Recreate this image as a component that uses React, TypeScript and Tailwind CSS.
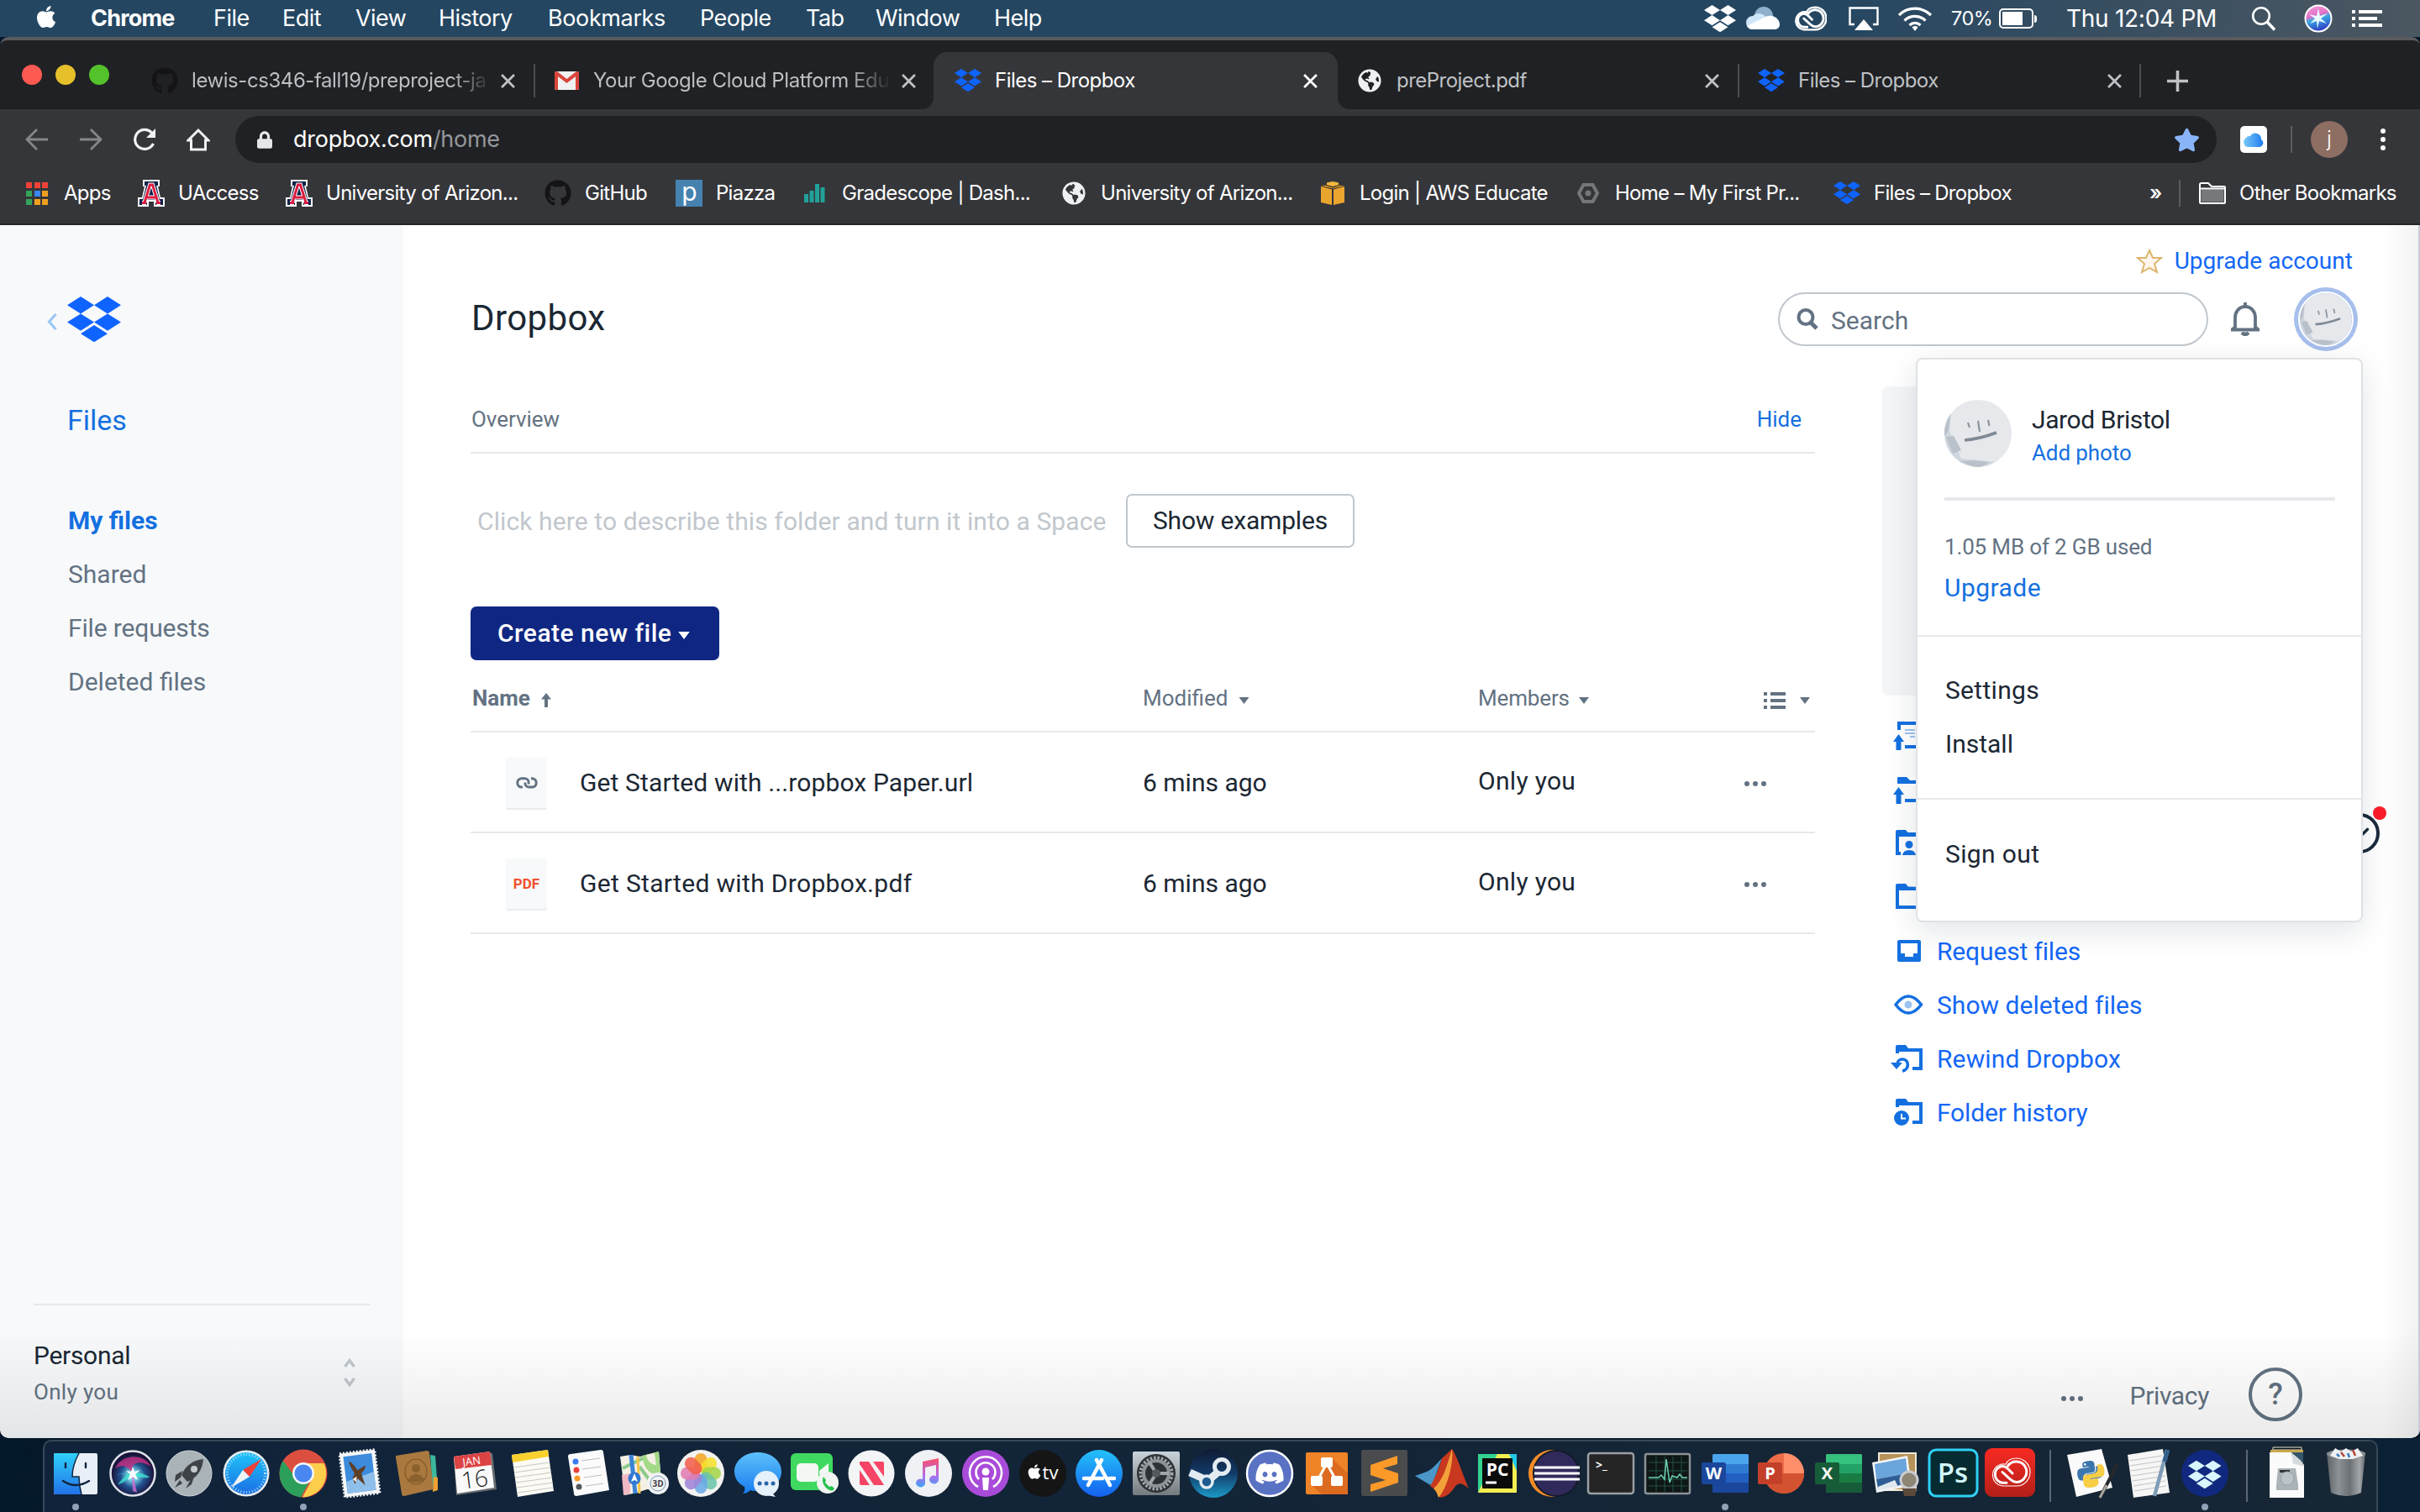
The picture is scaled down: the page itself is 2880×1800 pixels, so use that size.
import React from "react";
import { FaApple, FaGithub, FaDiscord, FaPython, FaLock, FaStar, FaGlobeAmericas } from "react-icons/fa";

type Kids = { children?: React.ReactNode };
type Cls = { className?: string };

function Dropbox({ className = "" }: Cls) {
  return (
    <svg viewBox="0 1.8 24 20.4" className={className} fill="currentColor">
      <path d="M6 1.807L0 5.629l6 3.822 6.001-3.822zM18 1.807l-6 3.822 6 3.822 6-3.822zM0 13.274l6 3.822 6.001-3.822L6 9.452zM18 9.452l-6 3.822 6 3.822 6-3.822zM6 18.371l6.001 3.822 6-3.822-6-3.822z" />
    </svg>
  );
}

function Caret({ className = "" }: Cls) {
  return (
    <svg viewBox="0 0 12 8" className={className} fill="currentColor">
      <path d="M0 0h12L6 8z" />
    </svg>
  );
}

/* Creative Cloud mark, drawn in a 46x35 box */
function CloudLoop({ outline, inner }: { outline: number; inner: number }) {
  return (
    <g fill="none" stroke="currentColor" strokeLinecap="round">
      <path d="M14 34A13.200 13.200 0 0 1 12 8.200C14.500 7.700 16.500 7.800 18 8.200 20 3.500 25 1 30 1a16.500 16.500 0 0 1 1 33z" strokeWidth={outline} />
      <path d="M26 19l-6-6c-3-2.500-6-3-8.500-2A10 10 0 0 0 14 30.200h5" strokeWidth={inner} />
      <path d="M20.500 10A12.300 12.300 0 1 1 31 29.500c-3 0-5-1-7-2.800L14 17.500" strokeWidth={inner} />
    </g>
  );
}

function SiriBall({ id, className = "" }: { id: string; className?: string }) {
  return (
    <svg viewBox="0 0 56 56" className={className}>
      <defs>
        <radialGradient id={id + "a"} cx=".5" cy=".55" r=".6">
          <stop offset="0" stopColor="#fff" />
          <stop offset=".15" stopColor="#7fe3ef" />
          <stop offset=".45" stopColor="#21508f" />
          <stop offset=".8" stopColor="#1a1238" />
        </radialGradient>
      </defs>
      <circle cx="28" cy="28" r="26.500" fill={"url(#" + id + "a)"} stroke="#dfe3ea" strokeWidth="2.500" />
      <path d="M7 22C14 6 40 2 50 20 38 12 24 14 28 28 20 17 13 18 7 22z" fill="#c92f83" opacity=".8" />
      <path d="M6 31c9-4 16-3 22-3 10-1 16 1 20 5-10 1-13 0-20-5-6 8-12 12-18 13 4-5 8-9 12-12-5-1-10 0-16 2z" fill="#3fe0d0" opacity=".8" />
      <path d="M28 27l5 24-5-2-1-20z" fill="#d26bd0" opacity=".8" />
      <path d="M28 20l2 6 7-2-6 5 3 7-6-4-6 4 3-7-5-4 6 1z" fill="#fff" />
    </svg>
  );
}

/* ---------- macOS menu bar ---------- */

function MenuBar() {
  return (
    <header className="flex h-[44px] shrink-0 items-center bg-linear-to-r from-[#244661] from-75% to-[#4b5761] pl-[40px] pr-[45px] font-['Inter',sans-serif] text-[27px] tracking-[-0.02em] text-white">
      <FaApple className="mr-[38px] mb-1 size-[30px]" />
      <nav className="flex flex-1 whitespace-nowrap">
        <span className="w-[146px] font-bold tracking-[-0.03em]">Chrome</span>
        <span className="w-[82px]">File</span>
        <span className="w-[87px]">Edit</span>
        <span className="w-[99px]">View</span>
        <span className="w-[130px]">History</span>
        <span className="w-[181px] tracking-[-0.014em]">Bookmarks</span>
        <span className="w-[126px]">People</span>
        <span className="w-[83px]">Tab</span>
        <span className="w-[141px]">Window</span>
        <span>Help</span>
      </nav>
      <Dropbox className="w-[38px]" />
      <svg viewBox="0 0 40 28" className="ml-[12px] h-[28px] w-[40px]">
        <circle cx="21" cy="11" r="11" fill="#8fb0cc" />
        <path d="M8 27A8 8 0 0 1 8 11c5-5 12-3 14 0l17 11a7 7 0 0 1-6 5z" fill="#cfe6fa" />
        <path d="M8 27c-4 0-6-2-7-4l22-11c8-4 17 2 17 9 0 4-3 6-7 6z" fill="#fff" />
      </svg>
      <svg viewBox="-1 -1 48 37" className="ml-[16px] h-[30px] w-[40px]"><CloudLoop outline={3} inner={3.6} /></svg>
      <svg viewBox="0 0 36 29" className="ml-[26px] h-[29px] w-[36px]">
        <path d="M7 21H1.500V1.500h33V21H29" fill="none" stroke="#fff" strokeWidth="2.400" />
        <path d="M18 15l11 13H7z" fill="#fff" />
      </svg>
      <svg viewBox="0 0 42 30" className="ml-[22px] h-[30px] w-[42px]" fill="none" stroke="#fff" strokeWidth="3.200">
        <path d="M2 11a27 27 0 0 1 38 0M8.500 17.500a18 18 0 0 1 25 0M14.500 23a9.500 9.500 0 0 1 13 0" />
        <path d="M17.500 25.500L21 30l3.500-4.500a5 5 0 0 0-7 0z" fill="#fff" stroke="none" />
      </svg>
      <span className="ml-[22px] w-[57px] text-[23.500px]">70%</span>
      <span className="flex items-center">
        <span className="block h-[24px] w-[41px] rounded-[5px] border-2 border-white p-[2px]">
          <span className="block h-full w-[24px] bg-white" />
        </span>
        <span className="ml-[1px] block h-[9px] w-[3px] rounded-r bg-white" />
      </span>
      <span className="ml-[35px] w-[220px] whitespace-nowrap text-[28px] tracking-[-0.01em]">Thu 12:04 PM</span>
      <svg viewBox="0 0 30 30" className="h-[30px] w-[30px]" fill="none" stroke="#fff" strokeWidth="2.600">
        <circle cx="12" cy="12" r="9.800" />
        <path d="M19 19l9 9.500" strokeWidth="3.500" />
      </svg>
      <svg viewBox="0 0 34 34" className="ml-[33px] h-[34px] w-[34px]">
        <defs>
          <linearGradient id="siriMini" x1="0" y1="0" x2=".3" y2="1">
            <stop offset="0" stopColor="#f2a4dd" />
            <stop offset=".45" stopColor="#e46fc6" />
            <stop offset=".6" stopColor="#3aa9e0" />
            <stop offset="1" stopColor="#3145c9" />
          </linearGradient>
        </defs>
        <circle cx="17" cy="17" r="15.500" fill="url(#siriMini)" stroke="#fff" strokeWidth="2" />
        <path d="M17 5l2 9 9-3-8 6 7 6-9-3-2 9-1-9-8 3 6-6-7-5 9 2z" fill="#e9fbff" />
      </svg>
      <svg viewBox="0 0 36 22" className="ml-[23px] h-[22px] w-[36px]" fill="#fff">
        <path d="M0 1h4v4H0zM8 1h28v4H8zM0 9h4v4H0zM8 9h22v4H8zM0 17h4v4H0zM8 17h28v4H8z" />
      </svg>
    </header>
  );
}

/* ---------- Chrome ---------- */

function Close({ className = "" }: Cls) {
  return (
    <svg viewBox="0 0 16 16" className={"size-[17px] shrink-0 " + className} stroke="currentColor" strokeWidth="2.600" fill="none">
      <path d="M1 1l14 14M15 1L1 15" />
    </svg>
  );
}

function Gmail({ className = "" }: Cls) {
  return (
    <svg viewBox="0 0 29 22" className={className}>
      <rect width="29" height="22" rx="2" fill="#f1f1f1" />
      <path d="M0 2a2 2 0 0 1 2-2h1l11.500 9L26 0h1a2 2 0 0 1 2 2v18a2 2 0 0 1-2 2h-2V6l-10.500 8L4 6v16H2a2 2 0 0 1-2-2z" fill="#d9453a" />
    </svg>
  );
}

function TabStrip() {
  return (
    <div className="flex h-[82px] items-end bg-[#202124] text-[24px] tracking-[-0.022em] text-[#bfc1c5]">
      <div className="flex h-[68px] w-[180px] items-center gap-[16px] pb-[14px] pl-[26px]">
        <span className="size-[24px] rounded-full bg-[#ff5a52]" />
        <span className="size-[24px] rounded-full bg-[#e6c02a]" />
        <span className="size-[24px] rounded-full bg-[#53c22b]" />
      </div>
      <div className="flex h-[68px] w-[457px] items-center">
        <FaGithub className="mr-[16px] size-[32px] text-[#141416]" />
        <span className="w-[352px] whitespace-nowrap bg-linear-to-r from-[#bfc1c5] from-88% to-[#bfc1c5]/10 bg-clip-text tracking-[-0.018em] text-transparent">lewis-cs346-fall19/preproject-ja</span>
        <Close className="ml-[16px]" />
        <span className="ml-auto h-[40px] w-[2px] bg-[#4c4d51]" />
      </div>
      <div className="flex h-[68px] w-[460px] items-center pl-[23px]">
        <Gmail className="mr-[17px] h-[22px] w-[29px]" />
        <span className="w-[352px] whitespace-nowrap bg-linear-to-r from-[#bfc1c5] from-86% to-[#bfc1c5]/5 bg-clip-text tracking-[-0.018em] text-transparent">Your Google Cloud Platform Edu</span>
        <Close className="ml-[15px]" />
      </div>
      <div className="flex h-[68px] w-[510px] items-end">
        <div className="h-[16px] w-[14px] bg-[#35363a]"><div className="size-full rounded-br-[14px] bg-[#202124]" /></div>
        <div className="flex h-[68px] flex-1 items-center rounded-t-[16px] bg-[#35363a] pl-[25px] pr-[24px] text-white">
          <Dropbox className="mr-[16px] w-[32px] text-[#0f64ff]" />
          <span className="flex-1">Files – Dropbox</span>
          <Close />
        </div>
        <div className="h-[16px] w-[15px] bg-[#35363a]"><div className="size-full rounded-bl-[14px] bg-[#202124]" /></div>
      </div>
      <div className="flex h-[68px] w-[463px] items-center pl-[9px]">
        <FaGlobeAmericas className="mr-[18px] size-[28px] text-[#eef0f3]" />
        <span className="flex-1">preProject.pdf</span>
        <Close className="mr-[22px]" />
        <span className="h-[40px] w-[2px] bg-[#4c4d51]" />
      </div>
      <div className="flex h-[68px] w-[478px] items-center pl-[22px]">
        <Dropbox className="mr-[16px] w-[32px] text-[#0f64ff]" />
        <span className="flex-1">Files – Dropbox</span>
        <Close className="mr-[21px]" />
        <span className="h-[40px] w-[2px] bg-[#4c4d51]" />
      </div>
      <div className="flex h-[68px] items-center pl-[31px]">
        <svg viewBox="0 0 24 24" className="size-[25px]" stroke="currentColor" strokeWidth="3.400"><path d="M12 0v24M0 12h24" /></svg>
      </div>
    </div>
  );
}

function Toolbar() {
  return (
    <div className="flex h-[72px] items-center bg-[#35363a] pl-[30px] text-white">
      <svg viewBox="0 0 28 28" className="mr-[36px] size-[28px]" fill="none" stroke="#85868a" strokeWidth="2.800"><path d="M27 14H3M14 2L2 14l12 12" /></svg>
      <svg viewBox="0 0 28 28" className="mr-[36px] size-[28px]" fill="none" stroke="#85868a" strokeWidth="2.800"><path d="M1 14h24M14 2l12 12-12 12" /></svg>
      <svg viewBox="0 0 28 28" className="mr-[36px] size-[28px]" fill="none" stroke="#f1f2f4" strokeWidth="3.200"><path d="M24.500 19A11.500 11.500 0 1 1 22.500 6" /><path d="M27 1v11H16z" fill="#f1f2f4" stroke="none" /></svg>
      <svg viewBox="0 0 28 28" className="mr-[30px] size-[28px]" fill="none" stroke="#f1f2f4" strokeWidth="3"><path d="M2 15L14 3l12 12h-3.500v11h-17V15z" /></svg>
      <div className="flex h-[56px] w-[2358px] items-center rounded-full bg-[#202124] pl-[26px] pr-[20px] text-[27px] tracking-[-0.01em]">
        <FaLock className="mr-[25px] h-[21px] w-[18px] text-[#e4e6e9]" />
        <span className="flex-1">dropbox.com<span className="text-[#94979c]">/home</span></span>
        <FaStar className="size-[31px] text-[#8ab4f8]" />
      </div>
      <div className="ml-[28px] flex size-[32px] items-center justify-center rounded-[5px] bg-white">
        <svg viewBox="0 0 26 17" className="w-[26px]">
          <defs><linearGradient id="icl" x1="0" x2="1"><stop offset="0" stopColor="#79c9f8" /><stop offset="1" stopColor="#1f7cf0" /></linearGradient></defs>
          <path d="M6 17a6 6 0 0 1-2-11 5 5 0 0 1 5-2 7 7 0 0 1 13 4 5 5 0 0 1-1 9z" fill="url(#icl)" />
        </svg>
      </div>
      <span className="ml-[28px] h-[32px] w-[2px] bg-[#5b5c60]" />
      <span className="ml-[22px] flex size-[44px] items-center justify-center rounded-full bg-[#8d6e63] text-[25px] font-light">j</span>
      <span className="ml-[39px] flex flex-col gap-[4px]">
        <i className="size-[6px] rounded-full bg-white" /><i className="size-[6px] rounded-full bg-white" /><i className="size-[6px] rounded-full bg-white" />
      </span>
    </div>
  );
}

function ArizonaA({ className = "" }: Cls) {
  return (
    <svg viewBox="0 0 32 32" className={className}>
      <path d="M6 0h20v8h-2l3 13h5v11H19v-6h-6v6H0V21h5L8 8H6z" fill="#fff" />
      <path d="M8 2h16v5h-2l4 16h4v7H21v-6H11v6H2v-7h4l4-16H8z" fill="#0c234b" />
      <path d="M5 27.500h5M22 27.500h5M8 27L14.500 6h3L24 27M11 21h10" fill="none" stroke="#fff" strokeWidth="5" />
      <path d="M5 27.500h5M22 27.500h5M8 27L14.500 6h3L24 27M11 21h10" fill="none" stroke="#dc1c40" strokeWidth="3" />
    </svg>
  );
}

function Bookmark({ icon, gap, w, children }: Kids & { icon: React.ReactNode; gap: string; w: string }) {
  return (
    <div className={"flex shrink-0 items-center whitespace-nowrap " + gap + " " + w}>
      {icon}
      <span>{children}</span>
    </div>
  );
}

function Bookmarks() {
  const dots = ["#ef4236", "#ef4236", "#ef4236", "#34a25a", "#3b86f0", "#f0a020", "#34a25a", "#f0a020", "#f0a020"];
  return (
    <div className="flex h-[66px] items-center border-b-2 border-[#242528] bg-[#35363a] pb-[8px] pl-[31px] text-[24px] tracking-[-0.03em] text-white">
      <Bookmark w="w-[133px]" gap="gap-[19px]" icon={<span className="grid w-[26px] grid-cols-3 gap-[3px]">{dots.map((c, i) => <i key={i} className="size-[7px]" style={{ background: c }} />)}</span>}>Apps</Bookmark>
      <Bookmark w="w-[176px]" gap="gap-[16px]" icon={<ArizonaA className="size-[32px]" />}>UAccess</Bookmark>
      <Bookmark w="w-[308px]" gap="gap-[16px]" icon={<ArizonaA className="size-[32px]" />}>University of Arizon...</Bookmark>
      <Bookmark w="w-[156px]" gap="gap-[16px]" icon={<FaGithub className="size-[32px] text-[#141416]" />}>GitHub</Bookmark>
      <Bookmark w="w-[153px]" gap="gap-[16px]" icon={<span className="flex size-[32px] items-center justify-center bg-[#4582b0] pb-[4px] text-[30px]">p</span>}>Piazza</Bookmark>
      <Bookmark w="w-[307px]" gap="gap-[20px]" icon={<svg viewBox="0 0 25 22" className="h-[22px] w-[25px]" fill="#21a199"><path d="M0 12h5v10H0zM6.500 8h5v14h-5zM13 0h5v22h-5zM19.500 4h5v18h-5z" /></svg>}>Gradescope | Dash...</Bookmark>
      <Bookmark w="w-[308px]" gap="gap-[18px]" icon={<FaGlobeAmericas className="size-[28px] text-[#eef0f3]" />}>University of Arizon...</Bookmark>
      <Bookmark w="w-[305px]" gap="gap-[18px]" icon={<svg viewBox="0 0 28 28" className="size-[28px]"><path d="M7 1.500L14 0l7 1.500V4l-7 2-7-2z" fill="#f5b73c" /><path d="M0 6l13 3.500V28L0 25zM28 6L15 9.500V28l13-3z" fill="#eaa52f" /><path d="M0 5.500l6-1 8 3 8-3 6 1-14 3z" fill="#c98718" /></svg>}>Login | AWS Educate</Bookmark>
      <Bookmark w="w-[305px]" gap="gap-[19px]" icon={<svg viewBox="0 0 26 24" className="w-[26px]" fill="none" stroke="#757679" strokeWidth="4"><path d="M7.500 2h11l5.500 10-5.500 10h-11L2 12z" /><circle cx="13" cy="12" r="3.500" fill="#757679" strokeWidth="0" /></svg>}>Home – My First Pr...</Bookmark>
      <Bookmark w="w-[376px]" gap="gap-[16px]" icon={<Dropbox className="w-[32px] text-[#0f64ff]" />}>Files – Dropbox</Bookmark>
      <span className="w-[35px] font-semibold">»</span>
      <span className="mr-[22px] h-[32px] w-[2px] bg-[#5b5c60]" />
      <Bookmark w="w-[240px]" gap="gap-[16px]" icon={<svg viewBox="0 0 32 26" className="w-[32px]" stroke="#fff" strokeWidth="2" fill="none"><path d="M1 7V2.500C1 1.500 2 1 3 1h8l4 4h15c1 0 1 0 1 1v18c0 1 0 1-1 1H2c-1 0-1 0-1-1z" /><path d="M2.500 8.500h27v15h-27z" fill="#77787b" stroke="none" /><path d="M1 7.500h30" /></svg>}>Other Bookmarks</Bookmark>
    </div>
  );
}

/* ---------- Dropbox page ---------- */

function Sidebar() {
  return (
    <aside className="flex w-[480px] shrink-0 flex-col bg-[#f7f9fb] text-[30px] text-[#637282]">
      <div className="mt-[85px] flex h-[55px] items-center pl-[56px]">
        <svg viewBox="0 0 12 20" className="mr-[12px] mt-1 h-[20px] w-[12px]" fill="none" stroke="#9cc8f3" strokeWidth="3.200"><path d="M10.500 1L2.500 10l8 9" /></svg>
        <Dropbox className="w-[64px] text-[#0f64ff]" />
      </div>
      <div className="mt-[72px] flex h-[40px] items-center pl-[80px] text-[34px] text-[#1470e0]">Files</div>
      <nav className="mt-[67px] flex flex-col pl-[81px]">
        <span className="flex h-[64px] items-center font-bold text-[#1470e0]">My files</span>
        <span className="flex h-[64px] items-center">Shared</span>
        <span className="flex h-[64px] items-center tracking-[-0.005em]">File requests</span>
        <span className="flex h-[64px] items-center">Deleted files</span>
      </nav>
      <div className="mx-[40px] mt-auto flex h-[160px] items-start border-t-2 border-[#e6e8eb]">
        <div className="flex-1">
          <div className="mt-[39px] flex h-[40px] items-center tracking-[-0.01em] text-[#1b2733]">Personal</div>
          <div className="mt-[8px] flex h-[32px] items-center text-[26px] tracking-[0.012em]">Only you</div>
        </div>
        <svg viewBox="0 0 14 34" className="mr-[17px] mt-[63px] h-[34px] w-[14px]" fill="none" stroke="#c1c7cd" strokeWidth="3.400"><path d="M1.500 10L7 2.500l5.500 7.500M1.500 24L7 31.500l5.500-7.500" /></svg>
      </div>
    </aside>
  );
}

function Face({ className = "" }: Cls) {
  return (
    <svg viewBox="0 0 80 80" className={className}>
      <defs><clipPath id="faceClip"><circle cx="40" cy="40" r="40" /></clipPath></defs>
      <g clipPath="url(#faceClip)">
        <rect width="80" height="80" fill="#e6e8eb" />
        <path d="M0 18l8-3-2 22 14 33 40 4-20 10H0z" fill="#d0d6dd" />
        <path d="M0 20l7-3-2 20-5 6zM2 44l9-1 9 17-10 4zM18 73l18-1 18 2-14 8z" fill="#b9c1ca" />
      </g>
      <path d="M28 27l2 6M40 25l2 13M52 24l1.500 7" stroke="#8a949f" strokeWidth="2.200" />
      <path d="M24 48c12-1 22-3 38-9" stroke="#7f8a96" strokeWidth="3.600" fill="none" />
    </svg>
  );
}

function FileRow({ icon, name, tracking }: { icon: React.ReactNode; name: string; tracking: string }) {
  return (
    <div className="flex h-[120px] items-center border-b-2 border-[#e6e8ed] text-[30px] text-[#1b2733]">
      <span className="ml-[42px] mr-[39px] mt-[4px] flex h-[62px] w-[49px] items-center justify-center rounded-[3px] border-b-2 border-[#e9ecef] bg-[#f7f9fa]">{icon}</span>
      <span className={"w-[670px] " + tracking}>{name}</span>
      <span className="w-[399px]">6 mins ago</span>
      <span className="w-[317px] pb-[3px] tracking-[0.01em]">Only you</span>
      <span className="mt-[3px] flex gap-[4px]">
        <i className="size-[6px] rounded-full bg-[#637282]" /><i className="size-[6px] rounded-full bg-[#637282]" /><i className="size-[6px] rounded-full bg-[#637282]" />
      </span>
    </div>
  );
}

function Files() {
  return (
    <section className="flex w-[1600px] flex-col">
      <div className="flex h-[80px] items-center justify-between border-b-2 border-[#e6e8eb] pl-[1px] pr-[16px] pt-[1px] text-[26px]">
        <span className="tracking-[-0.002em] text-[#637282]">Overview</span>
        <span className="text-[#1470e0]">Hide</span>
      </div>
      <div className="mt-[48px] flex h-[64px] items-center pl-[8px]">
        <span className="w-[772px] whitespace-nowrap pt-[1px] text-[30px] tracking-[0.0035em] text-[#c1c7cd]">Click here to describe this folder and turn it into a Space</span>
        <button className="h-[64px] w-[272px] rounded-[7px] border-2 border-[#c1c7cd] pb-[2px] text-[30px] tracking-[-0.006em] text-[#1b2733]">Show examples</button>
      </div>
      <button className="mt-[70px] flex h-[64px] w-[296px] items-center rounded-[7px] bg-[#0f2782] pb-[2px] pl-[32px] text-[30px] font-medium tracking-[0.016em] text-white">
        Create new file <Caret className="ml-[7px] mt-[6px] h-[9px] w-[16px]" />
      </button>
      <div className="flex h-[86px] items-center border-b-2 border-[#e6e8ed] pt-[7px] text-[26px] text-[#637282]">
        <span className="flex w-[800px] items-center pl-[2px] font-bold">Name
          <svg viewBox="0 0 12 17" className="ml-[13px] mt-[4px] h-[17px] w-[12px]" fill="currentColor"><path d="M6 0l6 7.500H8V17H4V7.500H0z" /></svg>
        </span>
        <span className="flex w-[399px] items-center">Modified <Caret className="ml-[13px] mt-[4px] h-[8px] w-[13px]" /></span>
        <span className="flex w-[340px] items-center tracking-[-0.006em]">Members <Caret className="ml-[11px] mt-[4px] h-[8px] w-[12px]" /></span>
        <svg viewBox="0 0 26 20" className="mt-[4px] h-[20px] w-[26px]" fill="currentColor"><path d="M0 0h4v4H0zM8 0h18v4H8zM0 8h4v4H0zM8 8h18v4H8zM0 16h4v4H0zM8 16h18v4H8z" /></svg>
        <Caret className="ml-[17px] mt-[5px] h-[8px] w-[12px]" />
      </div>
      <FileRow name="Get Started with ...ropbox Paper.url" tracking="tracking-[0.004em]" icon={<svg viewBox="0 0 28 14" className="h-[14px] w-[28px]" fill="none" stroke="#637282" strokeWidth="2.900"><path d="M9 12H7A5.200 5.200 0 0 1 7 1.800h4.500a4.600 4.600 0 0 1 4.600 4.600v2M19 1.800h2A5.200 5.200 0 0 1 21 12h-4.500a4.600 4.600 0 0 1-4.600-4.600v-1" /></svg>} />
      <FileRow name="Get Started with Dropbox.pdf" tracking="tracking-[0.011em]" icon={<span className="pt-[2px] text-[17px] font-bold text-[#f1502f]">PDF</span>} />
    </section>
  );
}

function UploadFile() {
  return (
    <svg viewBox="0 0 40 40" className="size-[40px]" fill="none" stroke="#1470e0" strokeWidth="4">
      <path d="M8 13V5h30M15 33h25" /><path d="M7.500 37V26" strokeWidth="6" /><path d="M7.500 18l6.500 9H1z" fill="#1470e0" stroke="none" />
      <path d="M15 13h12M15 17h12M21 21h6" stroke="#9cc3f0" strokeWidth="2" />
    </svg>
  );
}
function UploadFolder() {
  return (
    <svg viewBox="0 0 40 40" className="size-[40px]" fill="none" stroke="#1470e0" strokeWidth="4">
      <path d="M6 13V6q0-1 2-1h9l4 4h20v4z" fill="#1470e0" stroke="none" /><path d="M15 33h25" /><path d="M7.500 37V25" strokeWidth="6" /><path d="M7.500 17l6.500 9H1z" fill="#1470e0" stroke="none" />
    </svg>
  );
}
function FolderIcon({ kind }: { kind: "shared" | "plain" | "rewind" | "history" }) {
  return (
    <svg viewBox="0 0 40 40" className="size-[40px] overflow-visible" fill="none" stroke="#1470e0" strokeWidth="4">
      <path d="M4 12V6q0-2 2-2h10l3 4h17v4z" fill="#1470e0" stroke="none" />
      {kind === "plain" && <path d="M6 9v23h28V10z" />}
      {kind === "shared" && <><path d="M10 32H6V9h28v23h-4" /><circle cx="20" cy="21.500" r="4.500" fill="#1470e0" stroke="none" /><path d="M12 34q1-6 8-6t8 6z" fill="#1470e0" stroke="none" /></>}
      {kind === "rewind" && <><path d="M24 32h10V10H6v4" /><path d="M12 35c8-1 9-14 0-14-4 0-6 3-6 6" strokeWidth="3.600" /><path d="M-2 25h14l-7 8z" fill="#1470e0" stroke="none" /></>}
      {kind === "history" && <><path d="M24 32h10V10H6v4" /><circle cx="11" cy="27" r="9" fill="#1470e0" stroke="none" /><path d="M11 22v5.500h5" stroke="#fff" strokeWidth="2" /></>}
    </svg>
  );
}
function RequestIcon() {
  return (
    <svg viewBox="0 0 40 40" className="size-[40px]"><path fillRule="evenodd" d="M8 7h24q2 0 2 2v22q0 2-2 2H8q-2 0-2-2V9q0-2 2-2zM10 11v12h5v4h10v-4h5V11z" fill="#1470e0" /></svg>
  );
}
function EyeIcon() {
  return (
    <svg viewBox="0 0 40 40" className="size-[40px]" fill="none" stroke="#1470e0" strokeWidth="3.600"><path d="M4 20Q19 0 34.500 20 19 40 4 20z" strokeLinejoin="round" /><circle cx="19" cy="20" r="4.500" fill="#9cc3f0" stroke="none" /></svg>
  );
}

function Actions() {
  const rows: [React.ReactNode, string, string][] = [
    [<UploadFile />, "Upload files", ""],
    [<UploadFolder />, "Upload folder", ""],
    [<FolderIcon kind="shared" />, "New shared folder", ""],
    [<FolderIcon kind="plain" />, "New folder", ""],
    [<RequestIcon />, "Request files", "tracking-[-0.005em]"],
    [<EyeIcon />, "Show deleted files", "tracking-[0.001em]"],
    [<FolderIcon kind="rewind" />, "Rewind Dropbox", "tracking-[0.004em]"],
    [<FolderIcon kind="history" />, "Folder history", "tracking-[-0.005em]"],
  ];
  return (
    <aside className="ml-[80px] flex w-[560px] flex-col">
      <div className="h-[368px] rounded-[7px] bg-[#f4f5f7]" />
      <ul className="mt-[16px] pl-[12px] text-[30px] text-[#1467f5]">
        {rows.map(([icon, label, tracking], i) => (
          <li key={label} className="flex h-[64px] items-center gap-[13px]">
            {icon}
            {i > 3 && <span className={tracking}>{label}</span>}
          </li>
        ))}
      </ul>
    </aside>
  );
}

function PageHeader() {
  return (
    <div className="flex h-[192px] justify-between pr-[74px]">
      <h1 className="mt-[85px] flex h-[50px] items-center pl-[1px] text-[42px] tracking-[0.009em] text-[#1b2733]">Dropbox</h1>
      <div className="flex flex-col">
        <div className="flex h-[80px] items-center justify-end pr-[6px] pt-[6px] text-[28px] tracking-[0.001em] text-[#1467f5]">
          <svg viewBox="0 0 32 30" className="mr-[14px] h-[30px] w-[32px]" fill="#fff6ee" stroke="#dcb66c" strokeWidth="2"><path d="M16 2l4 9h10l-8 7 3 10-9-5-9 5 3-10-8-7h10z" /></svg>
          Upgrade account
        </div>
        <div className="flex h-[64px] items-center">
          <div className="flex h-[64px] w-[512px] items-center rounded-full border-2 border-[#c1c7cd] pl-[20px] text-[30px] text-[#637282]">
            <svg viewBox="0 0 26 26" className="mr-[15px] size-[26px]" fill="none" stroke="#637282" strokeWidth="4"><circle cx="11" cy="10.500" r="8.500" /><path d="M17 17l7 7" strokeWidth="5" /></svg>
            <span className="pt-[3px]">Search</span>
          </div>
          <svg viewBox="0 0 38 40" className="ml-[25px] h-[40px] w-[38px]" fill="none" stroke="#637282" strokeWidth="3.800"><path d="M7 32V18c0-7 5-13 12-13s12 6 12 13v14M2 32.500h34M3 33l5-5M35 33l-5-5M19 5V0" /><path d="M15 36q4 4 8 0" strokeWidth="4.500" /></svg>
          <span className="-my-2 ml-[39px] size-[76px] rounded-full bg-[#a6bfec] p-[5px]"><Face className="size-[66px] rounded-full border-2 border-white" /></span>
        </div>
      </div>
    </div>
  );
}

function AccountMenu() {
  return (
    <div className="absolute left-[2280px] top-[158px] flex h-[672px] w-[532px] flex-col rounded-[8px] border-2 border-[#e0e2e6] bg-white text-[30px] text-[#1b2733] shadow-[0_10px_36px_rgba(20,30,50,0.12)]">
      <div className="ml-[32px] mr-[31px] flex h-[168px] items-start border-b-4 border-[#e6e8eb] pt-[48px]">
        <Face className="mr-[24px] size-[80px]" />
        <div>
          <div className="flex h-[46px] items-center tracking-[-0.013em]">Jarod Bristol</div>
          <div className="flex h-[34px] items-center text-[26px] tracking-[-0.004em] text-[#1470e0]">Add photo</div>
        </div>
      </div>
      <div className="flex h-[162px] flex-col border-b-2 border-[#e6e8eb] pl-[32px] pt-[35px]">
        <div className="flex h-[40px] items-center text-[26px] tracking-[-0.006em] text-[#637282]">1.05 MB of 2 GB used</div>
        <div className="mt-[6px] flex h-[44px] items-center tracking-[0.015em] text-[#1470e0]">Upgrade</div>
      </div>
      <div className="flex h-[194px] flex-col border-b-2 border-[#e6e8eb] pl-[33px] pt-[31px]">
        <div className="flex h-[64px] items-center tracking-[0.01em]">Settings</div>
        <div className="flex h-[64px] items-center">Install</div>
      </div>
      <div className="mt-[32px] flex h-[64px] items-center pl-[33px] tracking-[0.012em]">Sign out</div>
    </div>
  );
}

function Page() {
  return (
    <div className="relative flex h-[1444px] overflow-hidden rounded-b-[10px] bg-white font-['Roboto',sans-serif]">
      <Sidebar />
      <main className="flex flex-1 flex-col pl-[80px]">
        <PageHeader />
        <div className="flex">
          <Files />
          <Actions />
        </div>
        <footer className="mb-[20px] mt-auto flex h-[64px] items-center justify-end pr-[140px] text-[30px] text-[#637282]">
          <span className="mr-[56px] mt-[10px] flex gap-[4px]">
            <i className="size-[6px] rounded-full bg-[#637282]" /><i className="size-[6px] rounded-full bg-[#637282]" /><i className="size-[6px] rounded-full bg-[#637282]" />
          </span>
          <span className="mr-[47px] pt-[3px] tracking-[-0.012em]">Privacy</span>
          <span className="flex size-[64px] items-center justify-center rounded-full border-4 border-[#637282] text-[36px] font-medium">?</span>
        </footer>
      </main>
      <div className="absolute left-[2784px] top-[700px] size-[48px] rounded-full border-4 border-[#1b2a3d]">
        <svg viewBox="0 0 42 42" className="size-full" fill="none" stroke="#1b2a3d" strokeWidth="3.500"><path d="M12 21l7 7 12-12" strokeLinecap="round" /></svg>
        <i className="absolute -top-[12px] left-[36px] size-[16px] rounded-full bg-[#fa1e2a]" />
      </div>
      <AccountMenu />
      <div className="pointer-events-none absolute inset-x-0 bottom-0 h-[130px] bg-linear-to-b from-black/0 to-black/8" />
      <div className="pointer-events-none absolute inset-y-0 right-0 w-[44px] border-r-2 border-[#c9ccd6] bg-linear-to-r from-black/0 to-black/5" />
    </div>
  );
}

/* ---------- Dock ---------- */

function Svg({ children }: Kids) {
  return <svg viewBox="0 0 56 56" className="size-[56px] overflow-visible">{children}</svg>;
}
function Glyph({ x = 28, y, size, fill = "#fff", weight = 700, children }: Kids & { x?: number; y: number; size: number; fill?: string; weight?: number }) {
  return <text x={x} y={y} fontSize={size} fill={fill} fontWeight={weight} textAnchor="middle" fontFamily="Open Sans, sans-serif">{children}</text>;
}
function Office({ label, a, b, c, d, round }: { label: string; a: string; b: string; c: string; d: string; round?: boolean }) {
  const clip = "office" + label;
  return (
    <Svg>
      <defs><clipPath id={clip}>{round ? <circle cx="31" cy="28" r="24" /> : <rect x="13" y="5" width="43" height="46" rx="2" />}</clipPath></defs>
      <g clipPath={"url(#" + clip + ")"}>
        <rect width="56" height="56" fill={b} />
        {round ? <><rect x="31" width="25" height="28" fill={a} /><rect y="28" width="56" height="28" fill={c} /></> : <><rect y="0" width="56" height="17" fill={a} /><rect y="28" width="56" height="11" fill={c} /><rect y="39" width="56" height="17" fill={d} /></>}
      </g>
      <rect x="0" y="15" width="29" height="26" rx="2" fill={d} />
      <Glyph x={14.5} y={35} size={20}>{label}</Glyph>
    </Svg>
  );
}

const PETALS = ["#f5a623", "#f6e02d", "#a5d64a", "#6cc5a8", "#6aa9e6", "#a084d6", "#e07cb0", "#f2604d"];

const mainIcons: React.ReactNode[] = [
  <Svg>
    <defs><linearGradient id="fnd" x2="0" y2="1"><stop stopColor="#2fd0fa" /><stop offset="1" stopColor="#2272e8" /></linearGradient></defs>
    <rect x="2" y="4" width="52" height="49" rx="2" fill="#e8eff7" />
    <path d="M4 4h28c-5 9-8 17-8 28h8c0 7 1 14 3 21H4q-2 0-2-2V6q0-2 2-2z" fill="url(#fnd)" />
    <path d="M16 16v5M40 16v5M13 37q15 10 31 0" stroke="#12253d" strokeWidth="2.400" fill="none" strokeLinecap="round" />
    <path d="M32 4c-5 9-8 17-8 28h8c0 7 1 14 3 21" stroke="#12253d" strokeWidth="1.500" fill="none" />
  </Svg>,
  <SiriBall id="dockSiri" className="size-[56px]" />,
  <Svg>
    <circle cx="28" cy="28" r="27" fill="#a9b3b8" stroke="#d5dadd" />
    <path d="M45 11c-13 1-22 9-26 19l7 8c10-4 18-13 19-27zM20 25l-8 5-1 8 7-5zM29 37l-5 9 7-5 3-9zM17 36l-6 9 9-5z" fill="#3f4347" />
    <circle cx="34" cy="23" r="4" fill="#c3cacf" />
  </Svg>,
  <Svg>
    <defs><linearGradient id="saf" x2="0" y2="1"><stop stopColor="#20c3f8" /><stop offset="1" stopColor="#1b6fe4" /></linearGradient></defs>
    <circle cx="28" cy="28" r="27.500" fill="#e8ecef" /><circle cx="28" cy="28" r="25" fill="url(#saf)" />
    <circle cx="28" cy="28" r="22.500" fill="none" stroke="#a9def8" strokeWidth="3" strokeDasharray="1 2.400" />
    <path d="M46 11L32 32l-8-8z" fill="#f0403a" /><path d="M10 45l14-21 8 8z" fill="#eef3f6" />
  </Svg>,
  <Svg>
    <circle cx="28" cy="28" r="28.500" fill="#dc4f40" />
    <path d="M4 13A28.500 28.500 0 0 0 25 56.500l12-22-18-1z" fill="#2c9f5b" />
    <path d="M52.500 16H28l11 18-12 22.500A28.500 28.500 0 0 0 52.500 16z" fill="#fdce4c" />
    <circle cx="28" cy="28" r="13" fill="#f4f6f8" /><circle cx="28" cy="28" r="10.500" fill="#4a86f0" />
  </Svg>,
  <Svg>
    <g transform="rotate(-7 28 28)">
      <rect x="7" y="2" width="42" height="52" fill="#f5f6f7" stroke="#f5f6f7" strokeWidth="3" strokeDasharray="2 2" /><rect x="11" y="6" width="34" height="44" fill="#3d8bdc" /><path d="M11 36l34-8v22H11z" fill="#8fc0ec" />
      <path d="M17 12q4 2 9 12c3-1 7-4 10-4-1 5-5 7-6 9l3 14-8-9-4 6-2-7 3-6q-5-9-5-15z" fill="#5d4027" /><path d="M19 34l5-3-1 7z" fill="#f6f1e5" />
    </g>
  </Svg>,
  <Svg>
    <path d="M44 6l6 1 3 40-6 2z" fill="#3bb79e" /><path d="M48 32l5 1v15l-6 2z" fill="#f0a030" />
    <path d="M3 7L40 1q3 0 3 3l5 43-35 8q-3 0-3-3L3 9z" fill="#a9793f" />
    <ellipse cx="27" cy="26" rx="13" ry="15" fill="none" stroke="#8a602d" strokeWidth="1.500" /><circle cx="27" cy="22" r="5" fill="#8a602d" /><path d="M17 36q10-14 20-1-9 7-20 1z" fill="#8a602d" />
  </Svg>,
  <Svg>
    <path d="M4 10l46-6 5 43-48 7z" fill="#6a6d70" /><path d="M4 8l43-6 5 43-44 7z" fill="#fafafa" /><path d="M4 8l43-6 2 16-43 5z" fill="#dc4344" />
    <g transform="rotate(-7 28 28)"><Glyph y={18} x={27} size={13} weight={400}>JAN</Glyph><Glyph y={45} x={28} size={28} fill="#222" weight={300}>16</Glyph></g>
  </Svg>,
  <Svg>
    <path d="M6 6l43-6 7 49-43 7z" fill="#fbfaf5" /><path d="M6 6l43-6 1 8L7 15z" fill="#f8d12e" />
    <path d="M8 21l43-6M9 27l43-6M10 33l43-6M11 39l43-6M12 45l43-6M13 51l42-6" stroke="#c9c9c4" />
  </Svg>,
  <Svg>
    <path d="M8 5l36-5q3 0 3 3l7 45-39 7q-3 0-3-3L5 8q0-3 3-3z" fill="#fbfbfb" />
    <circle cx="14" cy="14" r="3.500" fill="#3a7cf0" /><circle cx="15" cy="24" r="3.500" fill="#ea3f3a" /><circle cx="16" cy="34" r="3.500" fill="#f59b25" /><circle cx="18" cy="44" r="3.500" fill="#55585e" />
    <path d="M21 13l22-3M22 23l22-3M24 33l21-3M26 43l21-3" stroke="#bcbdbf" />
  </Svg>,
  <Svg>
    <path d="M-1 8l12-2 12 2 22-6 4 46-18-1-12 4-14 3z" fill="#f4f0e4" /><path d="M25 7l20-5 2 26c-12 4-20-6-22-21z" fill="#a3d987" /><path d="M30 6l10-2 2 14c-6 0-11-5-12-12z" fill="#f4f0e4" /><path d="M1 30l10-2v24l-8 2z" fill="#f0b9c4" />
    <path d="M22 20l24 32M2 22l24-12" stroke="#8dcb8b" strokeWidth="4" /><path d="M20 8l2 44" stroke="#f6c64b" strokeWidth="3" /><path d="M12 6l5 46" stroke="#3b83d8" strokeWidth="5" />
    <circle cx="16" cy="34" r="7.500" fill="#2f78d4" /><path d="M16 28l4 10-4-2-4 2z" fill="#fff" />
    <circle cx="44" cy="40" r="13" fill="#f0f2f4" /><circle cx="44" cy="40" r="9" fill="none" stroke="#7d98ad" /><Glyph x={44} y={44} size={10} fill="#444">3D</Glyph>
  </Svg>,
  <Svg>
    <circle cx="28" cy="28" r="28" fill="#f2f2f0" />
    {PETALS.map((c, i) => <rect key={c} x="20.500" y="4" width="15" height="23" rx="7.500" fill={c} opacity=".88" transform={"rotate(" + i * 45 + " 28 28)"} />)}
  </Svg>,
  <Svg>
    <defs><linearGradient id="msg" x2="0" y2="1"><stop stopColor="#5cc0fb" /><stop offset="1" stopColor="#1a7df0" /></linearGradient></defs>
    <path d="M28 3c16 0 28 10 28 23S44 49 28 49c-4 0-7 0-9-1-2 2-5 4-9 4 2-2 3-5 2-8C4 40 0 33 0 26 0 13 12 3 28 3z" fill="url(#msg)" />
    <circle cx="38" cy="40" r="15" fill="#e5f1fb" /><path d="M44 50l5 6-11-2z" fill="#e5f1fb" /><circle cx="30" cy="40" r="2.500" fill="#2a65a8" /><circle cx="38" cy="40" r="2.500" fill="#2a65a8" /><circle cx="46" cy="40" r="2.500" fill="#2a65a8" />
  </Svg>,
  <Svg>
    <rect x="-1" y="4" width="50" height="44" rx="6" fill="#3fd95f" /><rect x="6" y="16" width="26" height="22" rx="5" fill="#f3f8f3" /><path d="M33 25l11-9v22l-11-9z" fill="#f3f8f3" />
    <circle cx="43" cy="39" r="13" fill="#f1f5f2" /><path d="M38 32l3 4-1 3 5 5 3-1 3 3c-2 4-6 3-10-1s-5-9-3-13z" fill="#27c24c" />
  </Svg>,
  <Svg><circle cx="28" cy="28" r="27.500" fill="#f3f4f5" /><path d="M14 14h11l18 28H31L14 17zM14 24l12 18H16q-2 0-2-2zM30 14h11q2 0 2 2v16z" fill="#f64566" /></Svg>,
  <Svg>
    <defs><linearGradient id="mus" x2="0" y2="1"><stop stopColor="#fa4f68" /><stop offset=".6" stopColor="#b56bea" /><stop offset="1" stopColor="#38a6f6" /></linearGradient></defs>
    <circle cx="28" cy="28" r="28" fill="#eff1f4" /><path d="M21 14l19-4v26a5.500 5 0 1 1-3-5V18l-13 3v19a5.500 5 0 1 1-3-5z" fill="url(#mus)" />
  </Svg>,
  <Svg>
    <circle cx="28" cy="28" r="28" fill="#a94bd9" /><g fill="none" stroke="#fff" strokeWidth="2.600"><path d="M19 44a19 19 0 1 1 18 0" /><path d="M20 35a11.500 11.500 0 1 1 16 0" /></g><circle cx="28" cy="26" r="4.500" fill="#fff" /><path d="M24 33h8l-1 15h-6z" fill="#fff" />
  </Svg>,
  <Svg><circle cx="28" cy="28" r="28" fill="#151516" /><FaApple x="8" y="16" width="19" color="#fff" size={20} /><Glyph x={37} y={35} size={22} weight={400}>tv</Glyph></Svg>,
  <Svg>
    <defs><linearGradient id="aps" x2="0" y2="1"><stop stopColor="#24c1f9" /><stop offset="1" stopColor="#1560f0" /></linearGradient></defs>
    <circle cx="28" cy="28" r="28" fill="url(#aps)" /><g stroke="#fff" strokeWidth="4.500" strokeLinecap="round"><path d="M31 12L15 42M25 12l16 30M10 34h22M40 34h6" /></g>
  </Svg>,
  <Svg>
    <defs><linearGradient id="sys" x2="0" y2="1"><stop stopColor="#c9d4da" /><stop offset="1" stopColor="#747a7e" /></linearGradient></defs>
    <rect x="0" y="2" width="56" height="52" rx="2" fill="url(#sys)" /><circle cx="28" cy="28" r="23" fill="#2e3236" /><circle cx="28" cy="28" r="18.500" fill="none" stroke="#a0a6aa" strokeWidth="4" strokeDasharray="2.600 1.800" /><circle cx="28" cy="28" r="15" fill="none" stroke="#8c9297" strokeWidth="4" /><path d="M28 28H43M28 28l-8-13M28 28l-8 13" stroke="#a0a6aa" strokeWidth="4" /><circle cx="28" cy="28" r="5" fill="#54595e" />
  </Svg>,
  <Svg>
    <defs><linearGradient id="stm" x2="0" y2="1"><stop stopColor="#101a33" /><stop offset=".5" stopColor="#123a68" /><stop offset="1" stopColor="#1c9ac8" /></linearGradient></defs>
    <circle cx="28" cy="28" r="29" fill="url(#stm)" /><circle cx="38" cy="20" r="8.500" fill="none" stroke="#e3ebf2" strokeWidth="5" /><path d="M0 27l18 8M20 38l13-11" stroke="#e3ebf2" strokeWidth="9" /><circle cx="20" cy="38" r="7" fill="#1d5c8f" stroke="#e3ebf2" strokeWidth="3.500" />
  </Svg>,
  <Svg><circle cx="28" cy="28" r="27" fill="#5a72c4" stroke="#fff" strokeWidth="2.500" /><FaDiscord x="10" y="10" size={36} color="#fff" /></Svg>,
  <Svg><rect x="3" y="3" width="50" height="50" rx="2" fill="#ef8327" /><path d="M34 10l19 18v25H22L10 42z" fill="#dc6b20" /><path d="M27 18l-11 20M29 18l11 20" stroke="#fff" strokeWidth="3" /><rect x="21" y="9" width="14" height="12" rx="2" fill="#fff" /><rect x="9" y="31" width="14" height="12" rx="2" fill="#fff" /><rect x="33" y="31" width="14" height="12" rx="2" fill="#fff" /></Svg>,
  <Svg><rect x="1" y="0" width="55" height="55" rx="2" fill="#4a4b4c" /><path d="M44 7L12 18v12l18 6-18 5v9l33-11V28l-18-6 17-5z" fill="#fb9a29" /></Svg>,
  <Svg>
    <path d="M-2 31l14-5c8-4 12-10 18-16L18 43z" fill="#4a96c8" /><path d="M30 10L42-1c6 8 14 34 20 47-9-7-12-8-18 0-4 6-9 10-16 11-3-9-8-11-12-14 6-9 10-20 14-33z" fill="#c8381e" /><path d="M42-1c2 14-4 44-16 58-2-5-2-7-6-11 12-10 16-28 22-47z" fill="#f2a03a" />
  </Svg>,
  <Svg><rect x="5" y="5" width="46" height="46" fill="#33d391" /><path d="M28 5h23v46H5z" fill="#f2ee52" /><path d="M42 5h9v20z" fill="#21c8e8" /><rect x="10" y="10" width="36" height="36" fill="#0b0b0b" /><Glyph x={28} y={31} size={21}>PC</Glyph><path d="M14 39h13" stroke="#fff" strokeWidth="3" /></Svg>,
  <Svg><circle cx="25" cy="28" r="28" fill="#f28c28" /><circle cx="30" cy="28" r="28" fill="#151a2c" /><circle cx="30" cy="28" r="26" fill="#302a5c" /><path d="M4 21h54M4 28h54M4 35h54" stroke="#fff" strokeWidth="3" /></Svg>,
  <Svg><rect x="1" y="4" width="54" height="48" rx="3" fill="#252525" stroke="#9aa0a4" strokeWidth="2.500" /><Glyph x={17} y={23} size={14}>&gt;_</Glyph></Svg>,
  <Svg><rect x="1" y="5" width="53" height="47" rx="2" fill="#0e1716" stroke="#8b9295" strokeWidth="2.500" /><path d="M5 15h46M5 25h46M5 35h46M5 43h46M14 8v42M24 8v42M34 8v42M44 8v42" stroke="#22504a" /><path d="M5 33h12l3-3 4 5 2-24 4 28 3-8 6 2 3-4 3 4h6" fill="none" stroke="#6fd0b0" strokeWidth="1.500" /></Svg>,
  <Office label="W" a="#4aa5ec" b="#2f7bd2" c="#225fc0" d="#1a479c" />,
  <Office label="P" a="#ff8f6b" b="#ed6c47" c="#d35230" d="#c4402a" round />,
  <Office label="X" a="#36c17e" b="#23a266" c="#187c43" d="#175c38" />,
  <Svg><rect x="8" y="4" width="44" height="44" fill="#b8935a" stroke="#f0e8d8" strokeWidth="2" /><path d="M0 15l42-8 5 36-42 8z" fill="#f3f5f6" /><path d="M3 17l37-7 2 18-37 7z" fill="#6aa5dc" /><path d="M5 35l37-7 2 12-37 7z" fill="#2e5d96" /><path d="M7 44l20-8 4 8-24 4z" fill="#dfe8ee" /><circle cx="44" cy="36" r="10" fill="#8f8575" stroke="#c8ccd0" strokeWidth="3" /><path d="M36 46h17l-2 9H38z" fill="#5b4a3a" /></Svg>,
  <Svg><rect x="0" y="0" width="57" height="55" rx="8" fill="#062b30" stroke="#2fd0f5" strokeWidth="3" /><Glyph y={39} size={33} fill="#d3f7fc" weight={600}>Ps</Glyph></Svg>,
  <Svg><defs><linearGradient id="acc" x2="0" y2="1"><stop stopColor="#f72a22" /><stop offset="1" stopColor="#b41f19" /></linearGradient></defs><rect x="-1" y="-2" width="60" height="58" rx="9" fill="url(#acc)" /><g transform="translate(6 9)" color="#fff"><CloudLoop outline={1.1} inner={3} /></g></Svg>,
];

const docIcons: React.ReactNode[] = [
  <Svg><path d="M-1 6L40-1l13 46-43 11z" fill="#fafafa" /><g transform="rotate(-8 26 28)"><FaPython x="9" y="11" size={34} color="#3c76ad" /><path d="M42 20q3 4 1 11-1 3-5 3H26v1h9v5q-1 5-9 5t-9-5v-6q0-5 5-5h8q6-1 6-6v-4h4q1 0 2 1z" fill="#f7ce45" /></g><path d="M59 17L38 57" stroke="#25272b" strokeWidth="4" /><path d="M46 42L38 57" stroke="#a8a59c" strokeWidth="3" /></Svg>,
  <Svg><path d="M3 6L45-1l8 52-43 6z" fill="#f6f6f4" /><path d="M5 13l39-6M6 19l39-6M7 25l39-6M8 31l39-6M9 37l39-6M10 43l38-6M11 49l38-6" stroke="#bfc3c8" /><path d="M50 0L35 55" stroke="#7f9cb8" strokeWidth="4.500" /><path d="M51 0l-4 14" stroke="#34608c" strokeWidth="5" /></Svg>,
  <Svg><circle cx="28" cy="28" r="28" fill="#10297e" /><g transform="translate(8 10.500) scale(1.650) translate(0 -0.500)" fill="#d9f5fd"><path d="M6 1.807L0 5.629l6 3.822 6.001-3.822zM18 1.807l-6 3.822 6 3.822 6-3.822zM0 13.274l6 3.822 6.001-3.822L6 9.452zM18 9.452l-6 3.822 6 3.822 6-3.822zM6 18.371l6.001 3.822 6-3.822-6-3.822z" /></g></Svg>,
];
const endIcons: React.ReactNode[] = [
  <Svg><path d="M9-3h34v3H9z" fill="#0e1418" stroke="#e8e4d4" /><path d="M6 0h39v4H6z" fill="#c9a94e" /><path d="M5 3h26l15 15v39H5z" fill="#fbfbfb" /><path d="M31 3h14v14z" fill="#35566b" /><path d="M30 3q4 11 2 13l14 4q0-6-16-17z" fill="#d7dadd" /><path d="M15 22h21l3 20v6H13v-6z" fill="#a9b3b8" /><path d="M17 24h12v3H17z" fill="#2f3437" /><circle cx="26" cy="34" r="8" fill="#b9c3c8" stroke="#98a2a8" /></Svg>,
  <Svg><defs><linearGradient id="bin"><stop stopColor="#5d6266" /><stop offset=".3" stopColor="#8c9195" /><stop offset=".6" stopColor="#6c7175" /><stop offset=".85" stopColor="#a2a6a9" /><stop offset="1" stopColor="#62676b" /></linearGradient></defs><path d="M5 3h46l-5 48q-18 8-36 0z" fill="url(#bin)" /><ellipse cx="28" cy="5" rx="23" ry="5.500" fill="#8d9194" /><path d="M9 7l6-9 7 4 6-4 6 4 8-4 6 9-12 4H20z" fill="#eef0f1" /><path d="M22 3l4 5M36 0l3 7" stroke="#b5483c" strokeWidth="2.500" /><path d="M30 4l2 5M17 5l3 3" stroke="#3a78c0" strokeWidth="2.500" /></Svg>,
];

function DockItem({ children, running }: Kids & { running?: boolean }) {
  return (
    <div className="flex w-[67.700px] shrink-0 flex-col items-center pt-[10px]">
      {children}
      {running && <i className="mt-[8px] size-[8px] rounded-full bg-[#93a1b8]" />}
    </div>
  );
}

function Dock() {
  return (
    <div className="relative flex h-[88px] justify-start bg-linear-to-r from-[#04182b] via-[#0a1722] to-[#0b2135] pl-[51px] pt-[2px]">
      <div className="flex w-[2779px] rounded-t-[10px] border-2 border-b-0 border-[#374858] bg-linear-to-r from-[#10233a] to-[#162635] pl-[3px]">
        {mainIcons.map((icon, i) => <DockItem key={i} running={i === 0 || i === 4 || i === 29}>{icon}</DockItem>)}
        <div className="flex w-[30px] shrink-0 justify-center pt-[10px]"><i className="h-[62px] w-[2px] bg-[#5a6773]" /></div>
        {docIcons.map((icon, i) => <DockItem key={i} running={i === 2}>{icon}</DockItem>)}
        <div className="flex w-[32px] shrink-0 justify-center pt-[10px]"><i className="h-[62px] w-[2px] bg-[#5a6773]" /></div>
        {endIcons.map((icon, i) => <DockItem key={i}>{icon}</DockItem>)}
      </div>
    </div>
  );
}

export default function App() {
  return (
    <div className="flex h-[1800px] w-[2880px] flex-col overflow-hidden bg-[#04182b]">
      <MenuBar />
      <div className="flex h-[1668px] flex-col overflow-hidden rounded-b-[10px] rounded-t-[10px] border-t-4 border-[#5a5b5e] bg-[#202124] font-['Inter',sans-serif]">
        <TabStrip />
        <Toolbar />
        <Bookmarks />
        <Page />
      </div>
      <Dock />
    </div>
  );
}
